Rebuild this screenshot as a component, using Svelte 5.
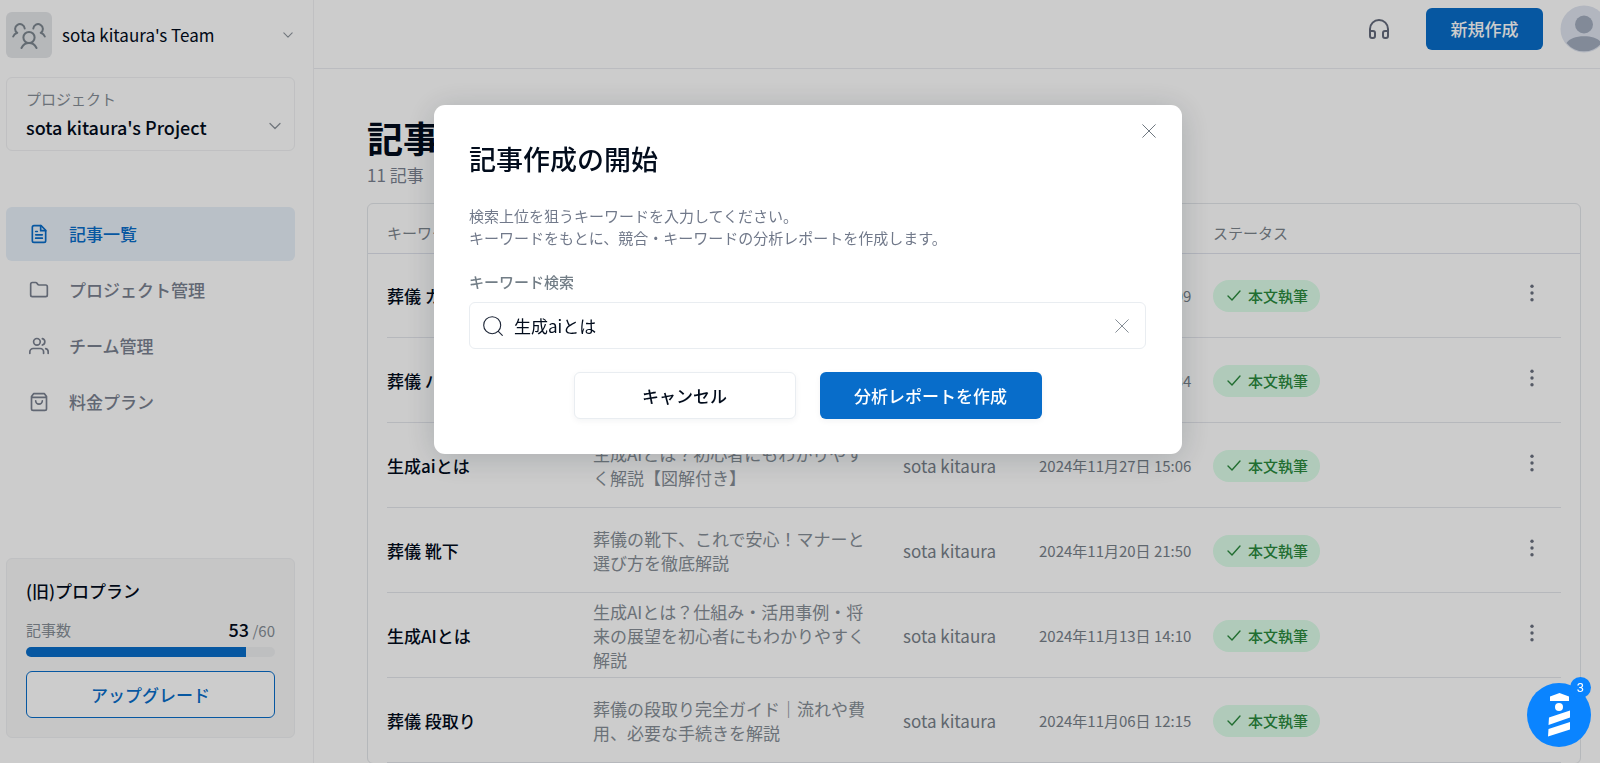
<script lang="ts">
  type Article = {
    keyword: string;
    title: string;
    author: string;
    date: string;
  };

  const navItems = [
    { id: "articles", label: "記事一覧" },
    { id: "projects", label: "プロジェクト管理" },
    { id: "team", label: "チーム管理" },
    { id: "pricing", label: "料金プラン" }
  ];

  const articles: Article[] = [
    { keyword: "葬儀 カタログ", title: "葬儀のカタログ完全ガイド", author: "sota kitaura", date: "2024年12月04日 10:09" },
    { keyword: "葬儀 ハンカチ", title: "葬儀のハンカチ選び方", author: "sota kitaura", date: "2024年12月02日 11:34" },
    { keyword: "生成aiとは", title: "生成AIとは？初心者にもわかりやすく解説【図解付き】", author: "sota kitaura", date: "2024年11月27日 15:06" },
    { keyword: "葬儀 靴下", title: "葬儀の靴下、これで安心！マナーと選び方を徹底解説", author: "sota kitaura", date: "2024年11月20日 21:50" },
    { keyword: "生成AIとは", title: "生成AIとは？仕組み・活用事例・将来の展望を初心者にもわかりやすく解説", author: "sota kitaura", date: "2024年11月13日 14:10" },
    { keyword: "葬儀 段取り", title: "葬儀の段取り完全ガイド｜流れや費用、必要な手続きを解説", author: "sota kitaura", date: "2024年11月06日 12:15" }
  ];

  let activeNav = $state("articles");
  let modalOpen = $state(true);
  let keyword = $state("生成aiとは");

  const used = 53;
  const limit = 60;
  let usedPercent = $derived((used / limit) * 100);

  function closeModal() {
    modalOpen = false;
  }
</script>

{#snippet chevron(size: number)}
  <svg class="chevron" width={size} height={size} viewBox="0 0 12 12" aria-hidden="true">
    <path d="M1 3.5l5 5 5-5" />
  </svg>
{/snippet}

{#snippet cross()}
  <svg width="14" height="14" viewBox="0 0 14 14" aria-hidden="true">
    <path d="M.7.7l12.6 12.6M13.3.7L.7 13.3" />
  </svg>
{/snippet}

<div class="app">
  <aside class="sidebar">
    <button class="team">
      <span class="team-icon">
        <svg width="34" height="28" viewBox="0 -1 34 28" aria-hidden="true">
          <circle cx="17" cy="15.500" r="5.600" />
          <path d="M9.500 26c1.500-3 4.200-4.900 7.500-4.900s6 1.900 7.500 4.900" />
          <path d="M12.700 6.500A4.800 4.800 0 1 0 5.200 10.900C3.200 11.500 1.800 12.800 1.200 14.500" />
          <path d="M21.300 6.500A4.800 4.800 0 1 1 28.800 10.900c2 .6 3.400 1.900 4 3.600" />
        </svg>
      </span>
      <span class="team-name">sota kitaura's Team</span>
      {@render chevron(10)}
    </button>

    <button class="project">
      <span class="project-text">
        <span class="project-label">プロジェクト</span>
        <span class="project-name">sota kitaura's Project</span>
      </span>
      {@render chevron(12)}
    </button>

    <nav>
      {#each navItems as item (item.id)}
        <a href="#{item.id}" class:active={activeNav === item.id} onclick={() => (activeNav = item.id)}>
          <svg width="20" height="20" viewBox="0 0 24 24" aria-hidden="true">
            {#if item.id === "articles"}
              <path d="M14.500 2H6a2 2 0 0 0-2 2v16a2 2 0 0 0 2 2h12a2 2 0 0 0 2-2V7.500z" />
              <path d="M14 2v6h6M16 13H8M16 17H8M10 9H8" />
            {:else if item.id === "projects"}
              <path d="M20 20a2 2 0 0 0 2-2V8a2 2 0 0 0-2-2h-7.900a2 2 0 0 1-1.700-.9L9.600 3.900A2 2 0 0 0 7.900 3H4a2 2 0 0 0-2 2v13a2 2 0 0 0 2 2z" />
            {:else if item.id === "team"}
              <path d="M17.500 21v-2a4 4 0 0 0-4-4H5a4 4 0 0 0-4 4v2" />
              <circle cx="9.500" cy="7" r="4" />
              <path d="M23 21v-2a4 4 0 0 0-3-3.870M16 3.130a4 4 0 0 1 0 7.750" />
            {:else}
              <path d="M5.500 2L3 5.500V20a2 2 0 0 0 2 2h14a2 2 0 0 0 2-2V5.500L18.500 2zM3 6.500h18" />
              <path d="M16 10.500a4 4 0 0 1-8 0" />
            {/if}
          </svg>
          {item.label}
        </a>
      {/each}
    </nav>

    <section class="plan">
      <h2>(旧)プロプラン</h2>
      <div class="usage">
        <span>記事数</span>
        <span><b>{used}</b> /{limit}</span>
      </div>
      <div class="bar">
        <div class="bar-fill" style="width: {usedPercent}%"></div>
      </div>
      <button class="upgrade">アップグレード</button>
    </section>
  </aside>

  <div class="content">
    <header>
      <button class="support" aria-label="サポート">
        <svg width="24" height="24" viewBox="0 0 24 24" aria-hidden="true">
          <path d="M3 14h3a2 2 0 0 1 2 2v3a2 2 0 0 1-2 2H5a2 2 0 0 1-2-2v-7a9 9 0 0 1 18 0v7a2 2 0 0 1-2 2h-1a2 2 0 0 1-2-2v-3a2 2 0 0 1 2-2h3" />
        </svg>
      </button>
      <button class="create" onclick={() => (modalOpen = true)}>新規作成</button>
      <button class="avatar" aria-label="アカウント">
        <svg width="48" height="48" viewBox="0 0 48 48" aria-hidden="true">
          <circle cx="24" cy="24" r="23.500" fill="#dfe4ef" />
          <circle cx="24" cy="19.500" r="9" fill="#a3adbf" />
          <path d="M6.500 38c3-4.500 9-6.800 17.500-6.800S38.500 33.500 41.500 38A22.500 22.500 0 0 1 6.500 38z" fill="#a3adbf" />
        </svg>
      </button>
    </header>

    <main>
      <h1>記事一覧</h1>
      <p class="count">11 記事</p>

      <div class="table-wrap">
        <table>
          <thead>
            <tr>
              <th class="col-keyword">キーワード</th>
              <th class="col-title">タイトル</th>
              <th class="col-author">作成者</th>
              <th class="col-date">作成日</th>
              <th>ステータス</th>
              <th class="col-menu" aria-label="操作"></th>
            </tr>
          </thead>
          <tbody>
            {#each articles as article (article.keyword)}
              <tr>
                <td class="col-keyword">{article.keyword}</td>
                <td class="col-title">{article.title}</td>
                <td class="col-author">{article.author}</td>
                <td class="col-date">{article.date}</td>
                <td>
                  <span class="status">
                    <svg width="14" height="11" viewBox="0 0 14 11" aria-hidden="true">
                      <path d="M1 6l4 4 8-9" />
                    </svg>
                    本文執筆
                  </span>
                </td>
                <td class="col-menu">
                  <button class="dots" aria-label="メニュー">
                    <svg width="4" height="18" viewBox="0 0 4 18" aria-hidden="true">
                      <circle cx="2" cy="2.200" r="1.700" />
                      <circle cx="2" cy="9" r="1.700" />
                      <circle cx="2" cy="15.800" r="1.700" />
                    </svg>
                  </button>
                </td>
              </tr>
            {/each}
          </tbody>
        </table>
      </div>
    </main>
  </div>
</div>

{#if modalOpen}
  <div class="overlay">
    <div class="modal" role="dialog" aria-modal="true" aria-labelledby="modal-title">
      <button class="close" aria-label="閉じる" onclick={closeModal}>
        {@render cross()}
      </button>
      <h2 id="modal-title">記事作成の開始</h2>
      <p>
        検索上位を狙うキーワードを入力してください。<br />
        キーワードをもとに、競合・キーワードの分析レポートを作成します。
      </p>
      <label for="keyword">キーワード検索</label>
      <div class="search">
        <svg class="search-icon" width="20" height="20" viewBox="0 0 20 20" aria-hidden="true">
          <circle cx="9.200" cy="9.200" r="8.500" />
          <path d="M15.300 15.300l4 4" />
        </svg>
        <input id="keyword" type="text" bind:value={keyword} />
        <button class="clear" aria-label="クリア" onclick={() => (keyword = "")}>
          {@render cross()}
        </button>
      </div>
      <div class="actions">
        <button class="cancel" onclick={closeModal}>キャンセル</button>
        <button class="submit" disabled={!keyword}>分析レポートを作成</button>
      </div>
    </div>
  </div>
{/if}

<button class="launcher" aria-label="チャットを開く">
  <svg width="24" height="46" viewBox="0 0 24 46" aria-hidden="true">
    <path d="M3 4.500L12.500 1 22 4.500V9H3z" />
    <circle cx="12" cy="15" r="4" />
    <path d="M2 25.500L23 18.500V25.500L1.500 33zM1.500 37L23 30V37.500L1 44.500z" />
  </svg>
  <span class="badge">3</span>
</button>

<style>
  :global(body) {
    overflow: hidden;
    background: #fff;
    font-family: "Noto Sans CJK JP", sans-serif;
    font-size: 17px;
    line-height: 24px;
    color: #020c1c;
  }

  button {
    padding: 0;
    border: none;
    background: none;
    font: inherit;
    color: inherit;
    cursor: pointer;
  }

  h1,
  h2,
  p {
    margin: 0;
  }

  svg {
    flex: none;
    display: block;
    fill: none;
    stroke: currentColor;
    stroke-linecap: round;
    stroke-linejoin: round;
  }

  /* the page keeps a gutter on the right that runs off the window */
  .app {
    display: flex;
    width: calc(100% + 16px);
    height: 100vh;
    overflow: hidden;
  }

  .sidebar {
    box-sizing: border-box;
    flex: none;
    width: 314px;
    padding: 12px 18px 25px 6px;
    border-right: 1px solid #f0f1f3;
    display: flex;
    flex-direction: column;
  }

  .chevron {
    color: #8e959d;
    stroke-width: 1.3;
  }

  .team {
    display: flex;
    align-items: center;
    gap: 10px;
    padding-right: 2px;
    text-align: left;
  }

  .team-icon {
    width: 46px;
    height: 46px;
    border-radius: 6px;
    background: #e4e6e9;
    color: #7c868f;
    display: flex;
    align-items: center;
    justify-content: center;
  }

  .team-icon svg {
    stroke-width: 2;
  }

  .team-name {
    flex: 1;
  }

  .project {
    box-sizing: border-box;
    height: 74px;
    margin-top: 19px;
    padding: 0 13px 2px 19px;
    border: 1px solid #f0f1f3;
    border-radius: 6px;
    display: flex;
    align-items: center;
    justify-content: space-between;
    text-align: left;
  }

  .project .chevron {
    margin-top: 26px;
  }

  .project-text {
    display: flex;
    flex-direction: column;
    gap: 4px;
  }

  .project-label {
    font-size: 15px;
    color: #868e96;
  }

  .project-name {
    font-size: 18px;
    font-weight: 500;
  }

  nav {
    margin-top: 56px;
    display: flex;
    flex-direction: column;
    gap: 2px;
  }

  nav a {
    height: 54px;
    padding-left: 23px;
    border-radius: 6px;
    display: flex;
    align-items: center;
    gap: 20px;
    color: #7a8190;
    font-weight: 500;
    text-decoration: none;
  }

  nav svg {
    stroke-width: 2;
  }

  nav a.active {
    background: #e8f0f9;
    color: #086dca;
  }

  .plan {
    margin-top: auto;
    padding: 20px 19px 19px;
    border: 1px solid #eff1f3;
    border-radius: 6px;
    background: #f8f8f8;
  }

  .plan h2 {
    font-size: 17px;
    font-weight: 500;
  }

  .usage {
    margin-top: 14px;
    display: flex;
    justify-content: space-between;
    align-items: center;
    font-size: 15px;
    color: #868e96;
  }

  .usage b {
    font-size: 18px;
    font-weight: 500;
    color: #020c1c;
  }

  .bar {
    height: 10px;
    margin-top: 4px;
    border-radius: 5px;
    background: #eeeff1;
    overflow: hidden;
  }

  .bar-fill {
    height: 100%;
    background: #086dca;
  }

  .upgrade {
    width: 100%;
    height: 47px;
    margin-top: 14px;
    border: 1px solid #086dca;
    border-radius: 6px;
    background: #fff;
    color: #086dca;
    font-weight: 500;
  }

  .content {
    flex: 1;
    min-width: 0;
  }

  header {
    box-sizing: border-box;
    height: 69px;
    padding: 5px 8px 0 0;
    border-bottom: 1px solid #eaecf1;
    display: flex;
    align-items: flex-start;
    justify-content: flex-end;
  }

  .support {
    margin: 12px 35px 0 0;
    color: #656b7c;
  }

  .support svg {
    stroke-width: 2;
  }

  .create {
    width: 117px;
    height: 42px;
    margin: 3px 17px 0 0;
    border-radius: 6px;
    background: #086dca;
    color: #fff;
    font-weight: 500;
  }

  .avatar svg {
    stroke: none;
  }

  main {
    padding: 44px 35px 0 53px;
  }

  h1 {
    font-size: 36px;
    line-height: 48px;
    font-weight: 700;
  }

  .count {
    margin-top: 2px;
    color: #7b8291;
  }

  .table-wrap {
    margin-top: 16px;
    border: 1px solid #e3e6ea;
    border-radius: 6px;
  }

  table {
    width: 100%;
    table-layout: fixed;
    border-collapse: collapse;
  }

  th,
  td {
    box-sizing: border-box;
    padding: 0;
    text-align: left;
  }

  th {
    height: 49px;
    padding-top: 10px;
    border-bottom: 1px solid #dfe2ec;
    font-size: 15px;
    font-weight: 400;
    color: #7c858d;
  }

  td {
    height: 85px;
  }

  tbody tr {
    background: linear-gradient(#e4e6ec, #e4e6ec) bottom center / calc(100% - 38px) 1px no-repeat;
  }

  .col-keyword {
    width: 225px;
    padding-left: 19px;
  }

  td.col-keyword {
    font-weight: 500;
  }

  .col-title {
    width: 310px;
    padding-right: 30px;
  }

  td.col-title {
    color: #868e96;
  }

  .col-author {
    width: 136px;
  }

  td.col-author {
    color: #78818a;
  }

  .col-date {
    width: 174px;
  }

  td.col-date {
    font-size: 15px;
    color: #78818a;
  }

  .col-menu {
    width: 96px;
  }

  .status {
    display: inline-flex;
    align-items: center;
    gap: 7px;
    height: 32px;
    padding: 0 12px 0 14px;
    border-radius: 16px;
    background: #dcfde9;
    color: #2b8a3e;
    font-size: 15px;
    font-weight: 500;
  }

  .status svg {
    stroke-width: 1.4;
  }

  .dots {
    display: flex;
    justify-content: center;
    width: 24px;
    margin: -6px auto 0;
    color: #6b7180;
  }

  .dots svg {
    fill: currentColor;
    stroke: none;
  }

  .overlay {
    position: fixed;
    inset: 0 -16px 0 0;
    padding: 105px 20px 0;
    background: rgba(0, 0, 0, 0.2);
  }

  .modal {
    position: relative;
    box-sizing: border-box;
    max-width: 748px;
    margin: 0 auto;
    padding: 35px 36px 35px 35px;
    border-radius: 11px;
    background: #fff;
    box-shadow: 0 4px 32px rgba(10, 25, 40, 0.18);
  }

  .close {
    position: absolute;
    top: 19px;
    right: 26px;
    color: #6f7880;
  }

  .modal h2 {
    font-size: 27px;
    line-height: 38px;
    font-weight: 500;
  }

  .modal p {
    margin-top: 27px;
    font-size: 15px;
    line-height: 22px;
    color: #71798a;
  }

  .modal label {
    display: block;
    margin-top: 22px;
    font-size: 15px;
    line-height: 22px;
    font-weight: 500;
    color: #727d86;
  }

  .search {
    box-sizing: border-box;
    height: 47px;
    margin-top: 9px;
    padding: 0 16px 0 13px;
    border: 1px solid #e9edf1;
    border-radius: 6px;
    display: flex;
    align-items: center;
    gap: 11px;
  }

  .search-icon {
    color: #1c2536;
    stroke-width: 1.1;
  }

  .search input {
    flex: 1;
    min-width: 0;
    padding: 0;
    border: none;
    outline: none;
    background: transparent;
    font: inherit;
    color: inherit;
  }

  .clear {
    color: #868e96;
  }

  .actions {
    margin-top: 23px;
    display: flex;
    justify-content: center;
    gap: 24px;
  }

  .actions button {
    box-sizing: border-box;
    width: 222px;
    height: 47px;
    border-radius: 6px;
    font-weight: 500;
    box-shadow: 0 2px 6px rgba(20, 40, 60, 0.05);
  }

  .cancel {
    border: 1px solid #e9edf1;
    background: #fff;
  }

  .submit {
    background: #086dca;
    color: #fff;
  }

  .launcher {
    position: fixed;
    right: 9px;
    bottom: 16px;
    width: 64px;
    height: 64px;
    border-radius: 50%;
    background: #0a84ff;
    display: flex;
    align-items: center;
    justify-content: center;
    color: #fff;
  }

  .launcher svg {
    fill: currentColor;
    stroke: none;
  }

  .badge {
    position: absolute;
    top: -6px;
    right: 0;
    width: 21px;
    height: 21px;
    border-radius: 50%;
    background: #0a84ff;
    font-family: Roboto, sans-serif;
    font-size: 13px;
    line-height: 21px;
  }
</style>
